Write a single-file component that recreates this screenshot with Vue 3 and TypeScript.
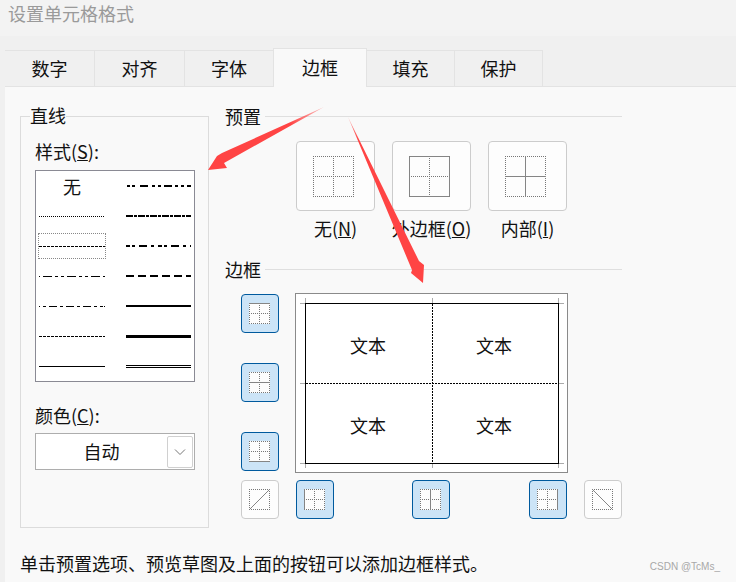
<script setup lang="ts">
const DOTS21 = 'M0 0.5H21M0 10.5H21M0 20.5H21M0.5 0V21M10.5 0V21M20.5 0V21'
const BOX21 = 'M0 0.5H21M0 20.5H21M0.5 0V21M20.5 0V21'
const DOTS41 = 'M0 0.5H41M0 20.5H41M0 40.5H41M0.5 0V41M20.5 0V41M40.5 0V41'

const presets = [
  { label: '无', key: 'N', solid: '' },
  { label: '外边框', key: 'O', solid: 'M0.5 0.5H40.5V40.5H0.5Z' },
  { label: '内部', key: 'I', solid: 'M0 20.5H41M20.5 0V41' },
]

const leftButtons = ['M0 0.5H21', 'M0 10.5H21', 'M0 20.5H21']

const bottomButtons = [
  { cls: '', dots: BOX21, solid: 'M0.5 20.5L20.5 0.5' },
  { cls: 'on first-edge', dots: DOTS21, solid: 'M0.5 0V21' },
  { cls: 'on mid-edge', dots: DOTS21, solid: 'M10.5 0V21' },
  { cls: 'on last-edge', dots: DOTS21, solid: 'M20.5 0V21' },
  { cls: 'diag-edge', dots: BOX21, solid: 'M0.5 0.5L20.5 20.5' },
]

const leftLines = [
  { dash: '1 1' },
  { dash: '3 1' },
  { dash: '1 3 9 3 3 3 3 3 9 3 3 3 3 3 9 3 3' },
  { dash: '1 3 3 3 8 3 3 3 8 3 3 3 8 3 3 3 3' },
  { dash: '3 1' },
  { dash: '' },
]
const rightLines = [
  { w: 2, y: 2, dash: '7 1 3 1' },
  { w: 2, y: 2, dash: '4 2 3 4 8 4 3 4' },
  { w: 2, y: 2, dash: '8 4' },
  { w: 2, y: 2, dash: '' },
  { w: 3, y: 2.5, dash: '' },
]
const cells = [1, 2, 3, 4]
</script>

<template>
  <div class="page">
    <div class="title">设置单元格格式</div>

    <div class="tabs">
      <div class="tab">数字</div>
      <div class="tab">对齐</div>
      <div class="tab">字体</div>
      <div class="tab active">边框</div>
      <div class="tab">填充</div>
      <div class="tab">保护</div>
    </div>

    <div class="panel">
      <div class="columns">
        <section class="line-group">
          <span class="group-title">直线</span>
          <div class="field-label">样式(<u>S</u>):</div>
          <div class="line-list">
            <div class="line-cell"><span class="none">无</span></div>
            <div class="line-cell">
              <svg width="66" height="4"><line x1="1" x2="65" y1="2" y2="2" stroke="#000" stroke-width="2" stroke-dasharray="3 2 3 5 8 4 3 3 3 3 8 3 3 3 3 3 4" /></svg>
            </div>
            <template v-for="(l, i) in leftLines" :key="i">
              <div class="line-cell">
                <span :class="{ selbox: i === 1 }">
                  <svg width="66" height="4"><line x1="0" x2="66" y1="2.5" y2="2.5" stroke="#000" :stroke-dasharray="l.dash" /></svg>
                </span>
              </div>
              <div class="line-cell">
                <svg v-if="i < 5" width="66" height="4"><line x1="0" x2="65" :y1="rightLines[i].y" :y2="rightLines[i].y" stroke="#000" :stroke-width="rightLines[i].w" :stroke-dasharray="rightLines[i].dash" /></svg>
                <svg v-else width="66" height="4"><line x1="0" x2="65" y1="1.5" y2="1.5" stroke="#000" /><line x1="0" x2="65" y1="3.5" y2="3.5" stroke="#000" /></svg>
              </div>
            </template>
          </div>

          <div class="field-label color-label">颜色(<u>C</u>):</div>
          <div class="select">
            <span class="select-value">自动</span>
            <span class="select-btn">
              <svg width="12" height="8" viewBox="0 0 12 8"><path d="M1 1.5L6 6.5L11 1.5" fill="none" stroke="#777" /></svg>
            </span>
          </div>
        </section>

        <div class="right">
          <div class="heading"><span>预置</span><i></i></div>
          <div class="presets">
            <div v-for="p in presets" :key="p.key" class="preset">
              <div class="preset-btn">
                <svg width="41" height="41" viewBox="0 0 41 41">
                  <path class="dots" :d="DOTS41" />
                  <path v-if="p.solid" class="solid" :d="p.solid" />
                </svg>
              </div>
              <div class="preset-label">{{ p.label }}(<u>{{ p.key }}</u>)</div>
            </div>
          </div>

          <div class="heading second"><span>边框</span><i></i></div>

          <div class="editor">
            <div class="left-buttons">
              <div v-for="(d, i) in leftButtons" :key="i" class="edge on">
                <svg width="21" height="21" viewBox="0 0 21 21">
                  <path class="dots" :d="DOTS21" />
                  <path class="solid" :d="d" />
                </svg>
              </div>
            </div>
            <div class="preview">
              <svg class="ticks" width="271" height="178" viewBox="0 0 271 178">
                <path d="M4 9.5H9M9.5 4V9M263 9.5H268M262.5 4V9M4 89.5H12M263 89.5H268M136.5 4V9M136.5 170V174M4 169.5H9M9.5 170V174M263 169.5H268M262.5 170V174" stroke="#aaa" fill="none" />
              </svg>
              <div class="canvas">
                <div v-for="c in cells" :key="c" class="cell">文本</div>
              </div>
            </div>
          </div>

          <div class="bottom-buttons">
            <div v-for="(b, i) in bottomButtons" :key="i" class="edge" :class="b.cls">
              <svg width="21" height="21" viewBox="0 0 21 21">
                <path class="dots" :d="b.dots" />
                <path class="solid" :d="b.solid" />
              </svg>
            </div>
          </div>
        </div>
      </div>
      <p class="hint">单击预置选项、预览草图及上面的按钮可以添加边框样式。</p>
    </div>

    <svg class="arrows" width="736" height="582" viewBox="0 0 736 582">
      <defs>
        <linearGradient id="a1" x1="324" y1="107" x2="290" y2="124" gradientUnits="userSpaceOnUse">
          <stop offset="0" stop-color="#f44" stop-opacity="0.3" />
          <stop offset="1" stop-color="#f44" />
        </linearGradient>
        <linearGradient id="a2" x1="348" y1="117" x2="358" y2="140" gradientUnits="userSpaceOnUse">
          <stop offset="0" stop-color="#f44" stop-opacity="0.4" />
          <stop offset="1" stop-color="#f44" />
        </linearGradient>
      </defs>
      <path fill="url(#a1)" d="M324 107L222 153L217 156L208 170L227 168L224 163Z" />
      <path fill="url(#a2)" d="M348 117L419 261L424 265L423 283L411 273L412 270Z" />
    </svg>

    <div class="watermark">CSDN @TcMs_</div>
  </div>
</template>

<style scoped>
.page {
  position: relative;
  width: 736px;
  height: 582px;
  overflow: hidden;
  background: #f0f0f0;
  color: #111;
  font-family: "Noto Sans CJK SC", "Noto Sans", sans-serif;
  font-size: 18px;
  line-height: 24px;
}
.title {
  height: 36px;
  padding-left: 8px;
  background: #f3f3f3;
  color: #9a9a9a;
  line-height: 26px;
}
.tabs {
  display: flex;
  align-items: flex-end;
  height: 50px;
  padding-left: 5px;
}
.tab {
  width: 90px;
  height: 36px;
  box-sizing: border-box;
  border-top: 1px solid #e3e3e3;
  border-right: 1px solid #e3e3e3;
  text-align: center;
  line-height: 34px;
}
.tab:nth-child(3) {
  width: 89px;
}
.tab:nth-child(5),
.tab:nth-child(6) {
  width: 88px;
}
.tab.active {
  width: 94px;
  height: 39px;
  margin-bottom: -1px;
  margin-left: -1px;
  background: #f9f9f9;
  border-left: 1px solid #e3e3e3;
  position: relative;
  z-index: 1;
  line-height: 37px;
}
.panel {
  height: 496px;
  margin-left: 5px;
  background: #f9f9f9;
  border-top: 1px solid #e3e3e3;
  box-sizing: border-box;
  padding: 29px 0 0 15px;
}
.columns {
  display: flex;
  gap: 16px;
}
.line-group {
  position: relative;
  width: 189px;
  height: 412px;
  box-sizing: border-box;
  border: 1px solid #dcdcdc;
  padding: 24px 14px 0;
}
.group-title {
  position: absolute;
  top: -14px;
  left: 9px;
  background: #f9f9f9;
}
.field-label {
  height: 24px;
  line-height: 20px;
  margin-bottom: 5px;
}
.line-list {
  box-sizing: border-box;
  width: 160px;
  height: 212px;
  border: 1px solid #8a8a94;
  background: #fff;
  padding-left: 3px;
  display: grid;
  grid-template-columns: 87px 65px;
  grid-auto-rows: 30px;
}
.line-cell {
  display: flex;
  align-items: center;
}
.line-cell svg {
  display: block;
}
.none {
  width: 66px;
  text-align: center;
}
.selbox {
  box-sizing: border-box;
  margin-left: -1px;
  padding: 10px 0;
  border: 1px dotted #888;
}
.color-label {
  margin-top: 23px;
  margin-bottom: 4px;
}
.select {
  box-sizing: border-box;
  width: 160px;
  height: 37px;
  border: 1px solid #adadad;
  background: #fff;
  display: flex;
  align-items: center;
  padding-right: 1px;
}
.select-value {
  flex: 1;
  text-align: center;
  padding-bottom: 2px;
}
.select-btn {
  box-sizing: border-box;
  width: 26px;
  height: 32px;
  border: 1px solid #d0d0d0;
  border-radius: 2px;
  display: flex;
  align-items: center;
  justify-content: center;
}
.right {
  width: 397px;
}
.heading {
  display: flex;
  align-items: center;
  gap: 4px;
  height: 1px;
  margin-bottom: 24px;
}
.heading span {
  padding-bottom: 1px;
}
.heading i {
  flex: 1;
  height: 1px;
  background: #dfdfdf;
}
.heading.second {
  margin-bottom: 23px;
}
.presets {
  display: flex;
  gap: 17px;
  padding-left: 71px;
  height: 128px;
}
.preset {
  width: 79px;
  display: flex;
  flex-direction: column;
  align-items: center;
}
.preset-btn {
  box-sizing: border-box;
  width: 79px;
  height: 70px;
  padding: 14px 0 0 16px;
  border: 1px solid #ccc;
  border-radius: 4px;
  background: #fdfdfd;
}
.preset-btn svg,
.edge svg {
  display: block;
}
.edge.on svg {
  background: #fdfdfd;
}
.preset-label {
  margin-top: 5px;
  white-space: nowrap;
}
.dots {
  fill: none;
  stroke: #777;
  stroke-dasharray: 1 1;
}
.solid {
  fill: none;
  stroke: #858585;
}
.editor {
  display: flex;
  gap: 16px;
  padding-left: 16px;
}
.left-buttons {
  display: flex;
  flex-direction: column;
  gap: 30px;
  padding-top: 1px;
  width: 38px;
}
.edge {
  box-sizing: border-box;
  width: 38px;
  height: 39px;
  flex: none;
  padding: 8px 0 0 7px;
  border: 1px solid #ccc;
  border-radius: 4px;
  background: #fdfdfd;
}
.edge.on {
  border-color: #005a9e;
  background: #cce4f7;
}
.preview {
  position: relative;
  box-sizing: border-box;
  width: 273px;
  height: 180px;
  border: 1px solid #8a8a8a;
  background: #fff;
  padding: 9px;
}
.ticks {
  position: absolute;
  left: 0;
  top: 0;
}
.canvas {
  position: relative;
  box-sizing: border-box;
  width: 254px;
  height: 161px;
  border: 1px solid #000;
  display: grid;
  grid-template-columns: 126px 126px;
  grid-template-rows: 80px 79px;
}
.canvas::before {
  content: "";
  position: absolute;
  left: 126px;
  top: 0;
  bottom: 0;
  width: 1px;
  background: repeating-linear-gradient(to bottom, #000 0 2px, transparent 2px 3px);
}
.canvas::after {
  content: "";
  position: absolute;
  top: 79px;
  left: 0;
  right: 0;
  height: 1px;
  background: repeating-linear-gradient(to right, #000 0 2px, transparent 2px 3px);
}
.cell {
  display: flex;
  align-items: center;
  justify-content: center;
  padding: 2px 2px 0 0;
  box-sizing: border-box;
}
.bottom-buttons {
  display: flex;
  margin-top: 7px;
  padding-left: 16px;
}
.first-edge {
  margin-left: 17px;
}
.mid-edge {
  margin-left: 78px;
}
.last-edge {
  margin-left: 79px;
}
.diag-edge {
  margin-left: 17px;
}
.hint {
  margin: 23px 0 0;
  white-space: nowrap;
}
.arrows {
  position: absolute;
  left: 0;
  top: 0;
  pointer-events: none;
}
.watermark {
  position: absolute;
  right: 16px;
  bottom: 8px;
  font-family: "Liberation Sans", sans-serif;
  font-size: 10px;
  line-height: 14px;
  color: #a8a8a8;
}
</style>
